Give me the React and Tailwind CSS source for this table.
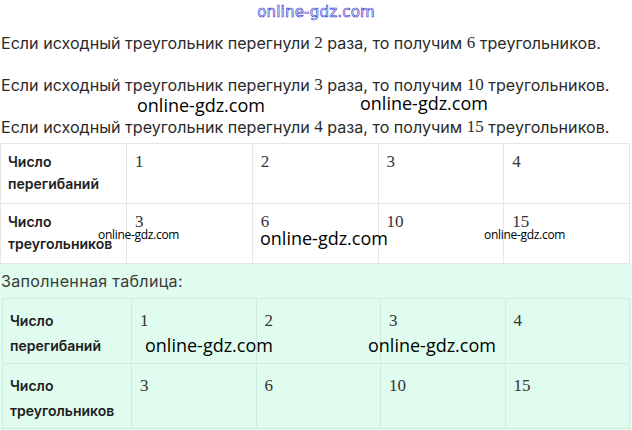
import React from "react";

const num = "font-['Liberation_Serif',serif] text-[17px]";

function Line({ a, b }) {
  return (
    <p className="h-[42px] flex items-center whitespace-nowrap">
      Если исходный треугольник перегнули&nbsp;<span className={num}>{a}</span>&nbsp;раза, то получим&nbsp;
      <span className={num}>{b}</span>&nbsp;треугольников.
    </p>
  );
}

function Table({ rows, border, firstW, rowH, pt, lead }) {
  return (
    <table className="w-full border-collapse table-fixed">
      <colgroup>
        <col className={firstW} />
        <col />
        <col />
        <col />
        <col />
      </colgroup>
      <tbody>
        {rows.map((r, i) => (
          <tr key={i} className={rowH}>
            <td className={`border ${border} align-top px-[7px] ${pt} font-['Inter',sans-serif] font-semibold text-[14px] ${lead} text-[#1d1d1d]`}>
              Число
              <br />
              {r.label}
            </td>
            {r.vals.map((v, j) => (
              <td key={j} className={`border ${border} align-top px-[8px] ${pt} ${num} ${lead} text-[#333]`}>
                {v}
              </td>
            ))}
          </tr>
        ))}
      </tbody>
    </table>
  );
}

const wm = "absolute font-['Open_Sans',sans-serif] text-black whitespace-nowrap";

const rows = [
  { label: "перегибаний", vals: ["1", "2", "3", "4"] },
  { label: "треугольников", vals: ["3", "6", "10", "15"] },
];

export default function App() {
  return (
    <div className="relative w-[632px] h-[430px] overflow-hidden bg-white font-['Inter',sans-serif] text-[16.1px] text-[#2a2a2a]">
      <div className="h-[22px] flex justify-center items-start pt-[1px]">
        <span className="font-['DejaVu_Sans',sans-serif] text-[15px] tracking-[0.2px] text-transparent [-webkit-text-stroke:0.6px_#2b2bd0]">
          online-gdz.com
        </span>
      </div>
      <div className="pl-[1px]">
        <Line a="2" b="6" />
        <Line a="3" b="10" />
        <Line a="4" b="15" />
      </div>
      <div className="mt-[-5px] pr-[2px]">
        <Table
          border="border-[#e6e6e6]"
          firstW="w-[126px]"
          rowH="h-[60px]"
          pt="pt-[7px]"
          lead="leading-[22px]"
          rows={rows}
        />
      </div>
      <div className="bg-[#dffcef] h-[170px] pt-[5px] pl-[1px] pr-[2px]">
        <p className="h-[26px] text-[#3a3a3a] tracking-[0.3px]">Заполненная таблица:</p>
        <div className="pl-[1px] pt-[3px]">
          <Table
            border="border-[#cfeedf]"
            firstW="w-[129px]"
            rowH="h-[65px]"
            pt="pt-[9px]"
            lead="leading-[25px]"
            rows={rows}
          />
        </div>
      </div>

      <span className={`${wm} left-[137px] top-[92px] text-[18px]`}>online-gdz.com</span>
      <span className={`${wm} left-[360px] top-[90px] text-[18px]`}>online-gdz.com</span>
      <span className={`${wm} left-[98px] top-[226px] text-[12px] tracking-[-0.3px]`}>online-gdz.com</span>
      <span className={`${wm} left-[260px] top-[225px] text-[18px]`}>online-gdz.com</span>
      <span className={`${wm} left-[484px] top-[226px] text-[12px] tracking-[-0.3px]`}>online-gdz.com</span>
      <span className={`${wm} left-[145px] top-[332px] text-[18px]`}>online-gdz.com</span>
      <span className={`${wm} left-[368px] top-[332px] text-[18px]`}>online-gdz.com</span>
    </div>
  );
}
